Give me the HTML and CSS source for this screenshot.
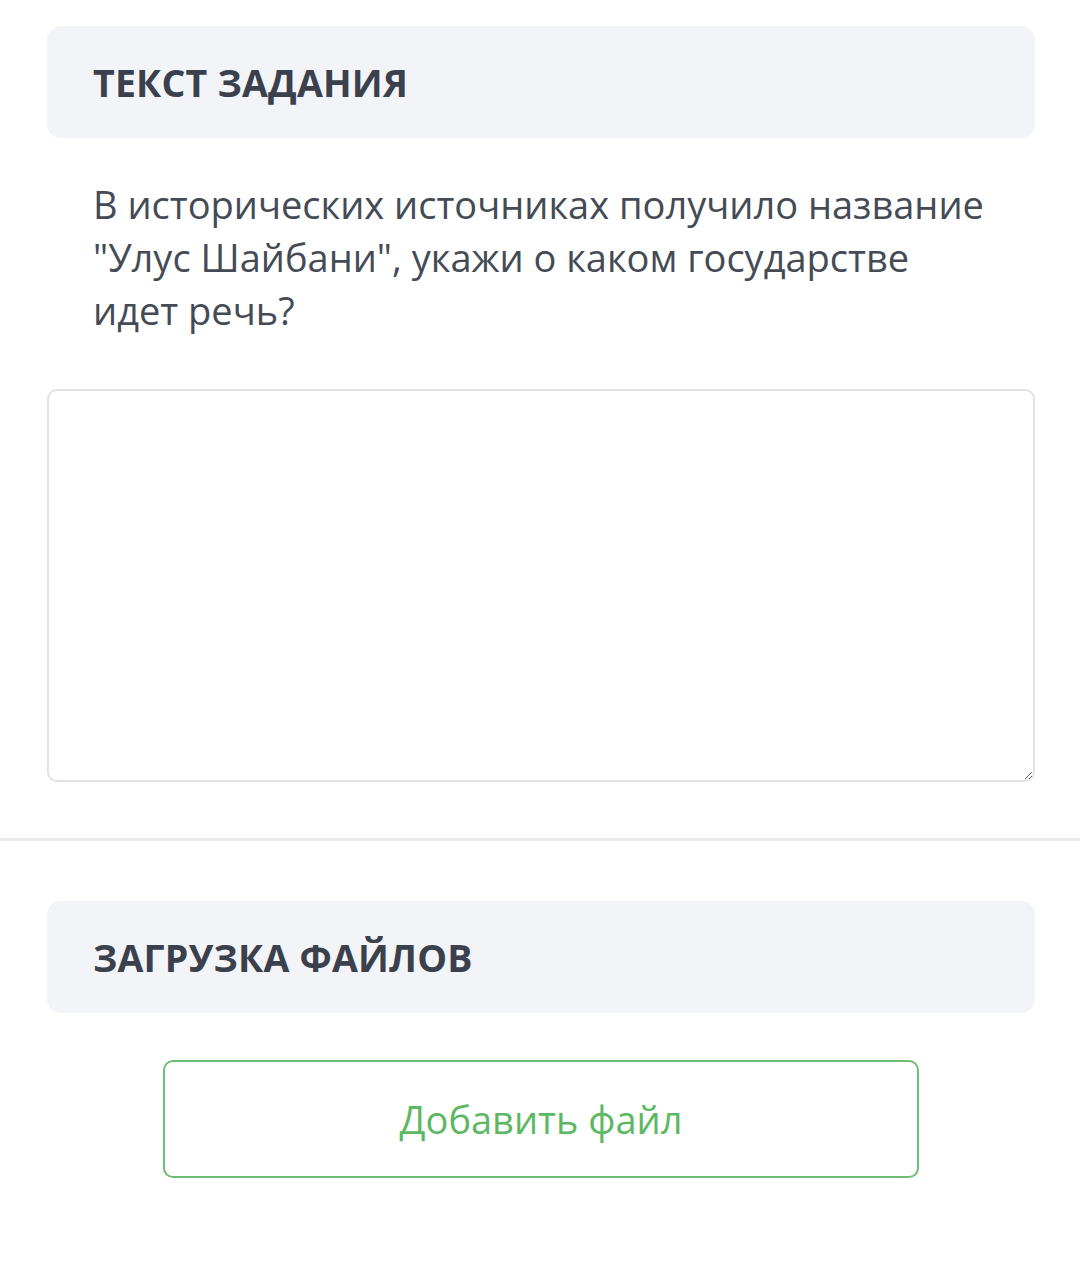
FILE: index.html
```html
<!DOCTYPE html>
<html lang="ru">
<head>
    <meta charset="UTF-8">
    <meta name="viewport" content="width=device-width, initial-scale=1.0">
    <title>Задание</title>
    <link rel="stylesheet" href="styles.css">
</head>
<body>
    <div class="section">
        <div class="section-head">
            <h2>Текст задания</h2>
        </div>
        <p class="task-text">В исторических источниках получило название "Улус Шайбани", укажи о каком государстве идет речь?</p>
        <textarea class="answer"></textarea>
    </div>

    <div class="divider"></div>

    <div class="section">
        <div class="section-head">
            <h2>Загрузка файлов</h2>
        </div>
        <div class="upload">
            <button type="button" class="upload-btn">Добавить файл</button>
        </div>
    </div>
</body>
</html>
```
FILE: styles.css
```css
body {
    font-family: "Open Sans", "Noto Sans", sans-serif;
    margin: 0;
    background: #fff;
    color: #434953;
}
.section {
    padding: 26px 45px 0 47px;
}
.section-head {
    background-color: #f3f4f8;
    border-radius: 14px;
    height: 112px;
    display: flex;
    align-items: center;
    padding: 0 46px;
}
.section-head h2 {
    margin: 0;
    font-size: 37.5px;
    font-weight: bold;
    text-transform: uppercase;
    color: #3a414c;
    letter-spacing: 0.2px;
}
.task-text {
    margin: 40px 0 0;
    padding: 0 46px;
    font-size: 38px;
    line-height: 53px;
    color: #454b55;
}
.answer {
    display: block;
    width: 100%;
    height: 393px;
    margin-top: 52px;
    box-sizing: border-box;
    border: 2px solid #e2e2e2;
    border-radius: 10px;
    font-family: inherit;
    font-size: 32px;
}
.divider {
    height: 3px;
    background-color: #e9e9e9;
    margin-top: 56px;
}
.section + .divider + .section {
    padding-top: 60px;
}
.upload {
    display: flex;
    justify-content: center;
    padding: 47px 0 0;
}
.upload-btn {
    width: 756px;
    height: 118px;
    background: #fff;
    border: 2px solid #6dbd72;
    border-radius: 10px;
    color: #5cb862;
    font-family: inherit;
    font-size: 38px;
    cursor: pointer;
}
```
